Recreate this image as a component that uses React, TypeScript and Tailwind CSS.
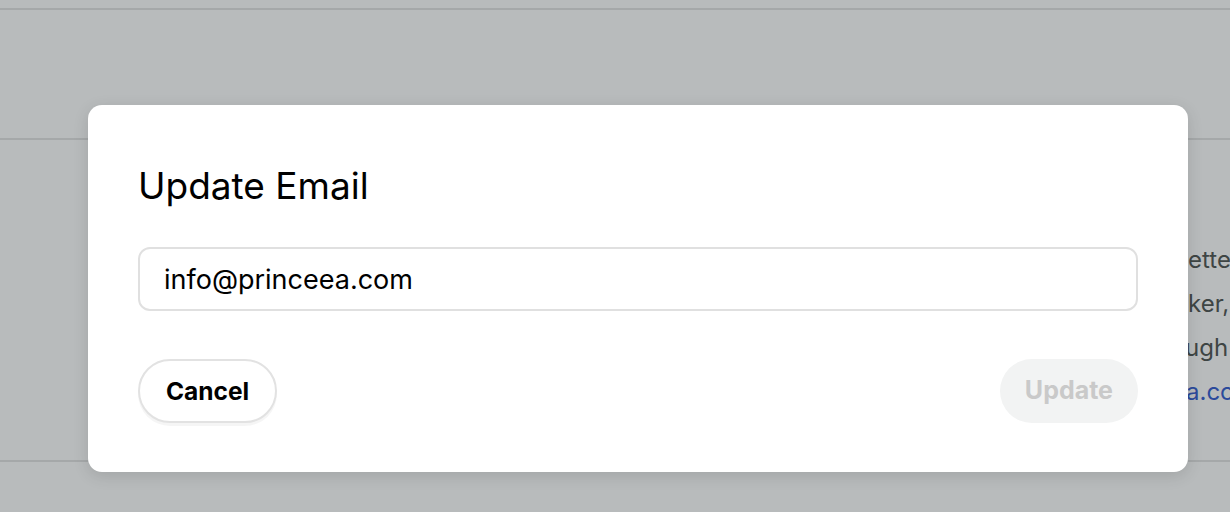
const font = { fontFamily: "Inter, 'Noto Sans', sans-serif" };

export default function App() {
  return (
    <div
      className="relative h-[512px] w-[1230px] overflow-hidden bg-[#b8bbbc]"
      style={font}
    >
      <div className="h-[10px] border-b-2 border-[#a5a8a9]" />
      <div className="h-[130px] border-b-2 border-[#a5a8a9]" />
      <div className="h-[322px] border-b-2 border-[#a5a8a9] pl-[1188px] pt-[108px]">
        <div className="flex flex-col gap-[20px] whitespace-nowrap text-[24px] leading-[24px] text-[#3e4544]">
          <span>etter</span>
          <span>ker,</span>
          <span className="-ml-[3px]">ugh</span>
          <span className="-ml-[2px] text-[#2b4a9b]">a.com</span>
        </div>
      </div>

      <div className="absolute left-[88px] top-[105px] flex h-[367px] w-[1100px] flex-col rounded-[14px] bg-white px-[50px] pt-[59px] shadow-[0_4px_16px_rgba(0,0,0,0.12)]">
        <h2 className="text-[37px] leading-[44px] font-normal text-black">
          Update Email
        </h2>
        <input
          type="text"
          defaultValue="info@princeea.com"
          className="mt-[39px] h-[64px] w-full rounded-[12px] border-2 border-[#e0e0e0] px-[24px] text-[27px] text-black outline-none"
        />
        <div className="mt-[48px] flex items-center justify-between">
          <button className="h-[64px] rounded-full border-2 border-[#e2e2e2] bg-white px-[26px] text-[24.5px] font-bold text-black shadow-[0_3px_0_rgba(0,0,0,0.04)]">
            Cancel
          </button>
          <button
            disabled
            className="h-[64px] rounded-full bg-[#f2f3f3] px-[25px] text-[25px] font-bold text-[#c9c9c9]"
          >
            Update
          </button>
        </div>
      </div>
    </div>
  );
}
